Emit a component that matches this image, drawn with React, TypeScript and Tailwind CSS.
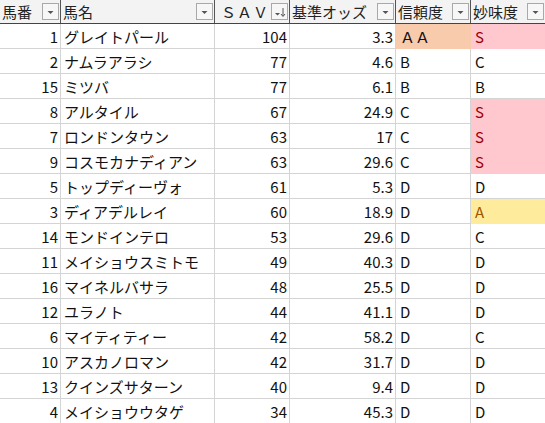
import React from "react";

type Fill = "none" | "orange" | "pink" | "yellow";

const rows: [string, string, string, string, string, Fill, string, Fill][] = [
  ["1", "グレイトパール", "104", "3.3", "ＡＡ", "orange", "S", "pink"],
  ["2", "ナムラアラシ", "77", "4.6", "B", "none", "C", "none"],
  ["15", "ミツバ", "77", "6.1", "B", "none", "B", "none"],
  ["8", "アルタイル", "67", "24.9", "C", "none", "S", "pink"],
  ["7", "ロンドンタウン", "63", "17", "C", "none", "S", "pink"],
  ["9", "コスモカナディアン", "63", "29.6", "C", "none", "S", "pink"],
  ["5", "トップディーヴォ", "61", "5.3", "D", "none", "D", "none"],
  ["3", "ディアデルレイ", "60", "18.9", "D", "none", "A", "yellow"],
  ["14", "モンドインテロ", "53", "29.6", "D", "none", "C", "none"],
  ["11", "メイショウスミトモ", "49", "40.3", "D", "none", "D", "none"],
  ["16", "マイネルバサラ", "48", "25.5", "D", "none", "D", "none"],
  ["12", "ユラノト", "44", "41.1", "D", "none", "D", "none"],
  ["6", "マイティティー", "42", "58.2", "D", "none", "C", "none"],
  ["10", "アスカノロマン", "42", "31.7", "D", "none", "D", "none"],
  ["13", "クインズサターン", "40", "9.4", "D", "none", "D", "none"],
  ["4", "メイショウウタゲ", "34", "45.3", "D", "none", "D", "none"],
];

function fillClass(f: Fill): string {
  if (f === "orange") return "bg-[#f8cbad] border-[#f8cbad] text-[#111]";
  if (f === "pink") return "bg-[#ffc7ce] border-[#ffc7ce] text-[#9c0006]";
  if (f === "yellow") return "bg-[#ffeb9c] border-[#ffeb9c] text-[#9c5700]";
  return "bg-white border-[#d4d4d4] text-[#111]";
}

function DropBtn({ sort }: { sort?: boolean }) {
  return (
    <div className="w-[17px] h-[17px] border border-[#a9a9a9] bg-[#f7f7f7] flex items-center justify-center shrink-0">
      {sort ? (
        <svg width="15" height="15" viewBox="0 0 15 15">
          <path d="M3 9 L8 9 L5.5 11.5 Z" fill="#555" />
          <path d="M11 4 L11 12" stroke="#555" strokeWidth="1" />
          <path d="M9 10 L11 12.5 L13 10" stroke="#555" strokeWidth="1" fill="none" />
        </svg>
      ) : (
        <svg width="15" height="15" viewBox="0 0 15 15">
          <path d="M4.5 7 L10.5 7 L7.5 10 Z" fill="#555" />
        </svg>
      )}
    </div>
  );
}

const widths = ["w-[61px]", "w-[154px]", "w-[75px]", "w-[106px]", "w-[75px]", "w-[74px]"];

export default function App() {
  const headers = ["馬番", "馬名", "ＳＡＶ", "基準オッズ", "信頼度", "妙味度"];
  return (
    <div
      className="w-[545px] h-[423px] overflow-hidden bg-white text-[15px] leading-none"
      style={{ fontFamily: '"Noto Sans CJK JP", "Noto Sans", sans-serif' }}
    >
      <div className="flex h-[24px] bg-[#f3f3f3] border-b border-[#444]">
        {headers.map((h, i) => (
          <div
            key={i}
            className={`${widths[i]} h-full flex items-center justify-between pl-[2px] pr-[1px] ${i < 5 ? "border-r border-[#555]" : ""}`}
          >
            <span className={`text-[#222] ${i === 2 ? "tracking-[1px] pl-[4px]" : ""}`}>{h}</span>
            <DropBtn sort={i === 2} />
          </div>
        ))}
      </div>
      {rows.map((r, idx) => (
        <div key={idx} className="flex h-[25px]">
          <div className="w-[61px] h-full border-r border-b border-[#d4d4d4] flex items-center justify-end pr-[2px] text-[#111]">
            {r[0]}
          </div>
          <div className="w-[154px] h-full border-r border-b border-[#d4d4d4] flex items-center pl-[3px] text-[#111] whitespace-nowrap">
            {r[1]}
          </div>
          <div className="w-[75px] h-full border-r border-b border-[#d4d4d4] flex items-center justify-end pr-[2px] text-[#111]">
            {r[2]}
          </div>
          <div className="w-[106px] h-full border-r border-b border-[#d4d4d4] flex items-center justify-end pr-[2px] text-[#111]">
            {r[3]}
          </div>
          <div className={`w-[75px] h-full border-r border-b flex items-center pl-[4px] ${fillClass(r[5])}`}>
            {r[4]}
          </div>
          <div className={`w-[74px] h-full border-b flex items-center pl-[4px] ${fillClass(r[7])}`}>
            {r[6]}
          </div>
        </div>
      ))}
    </div>
  );
}
